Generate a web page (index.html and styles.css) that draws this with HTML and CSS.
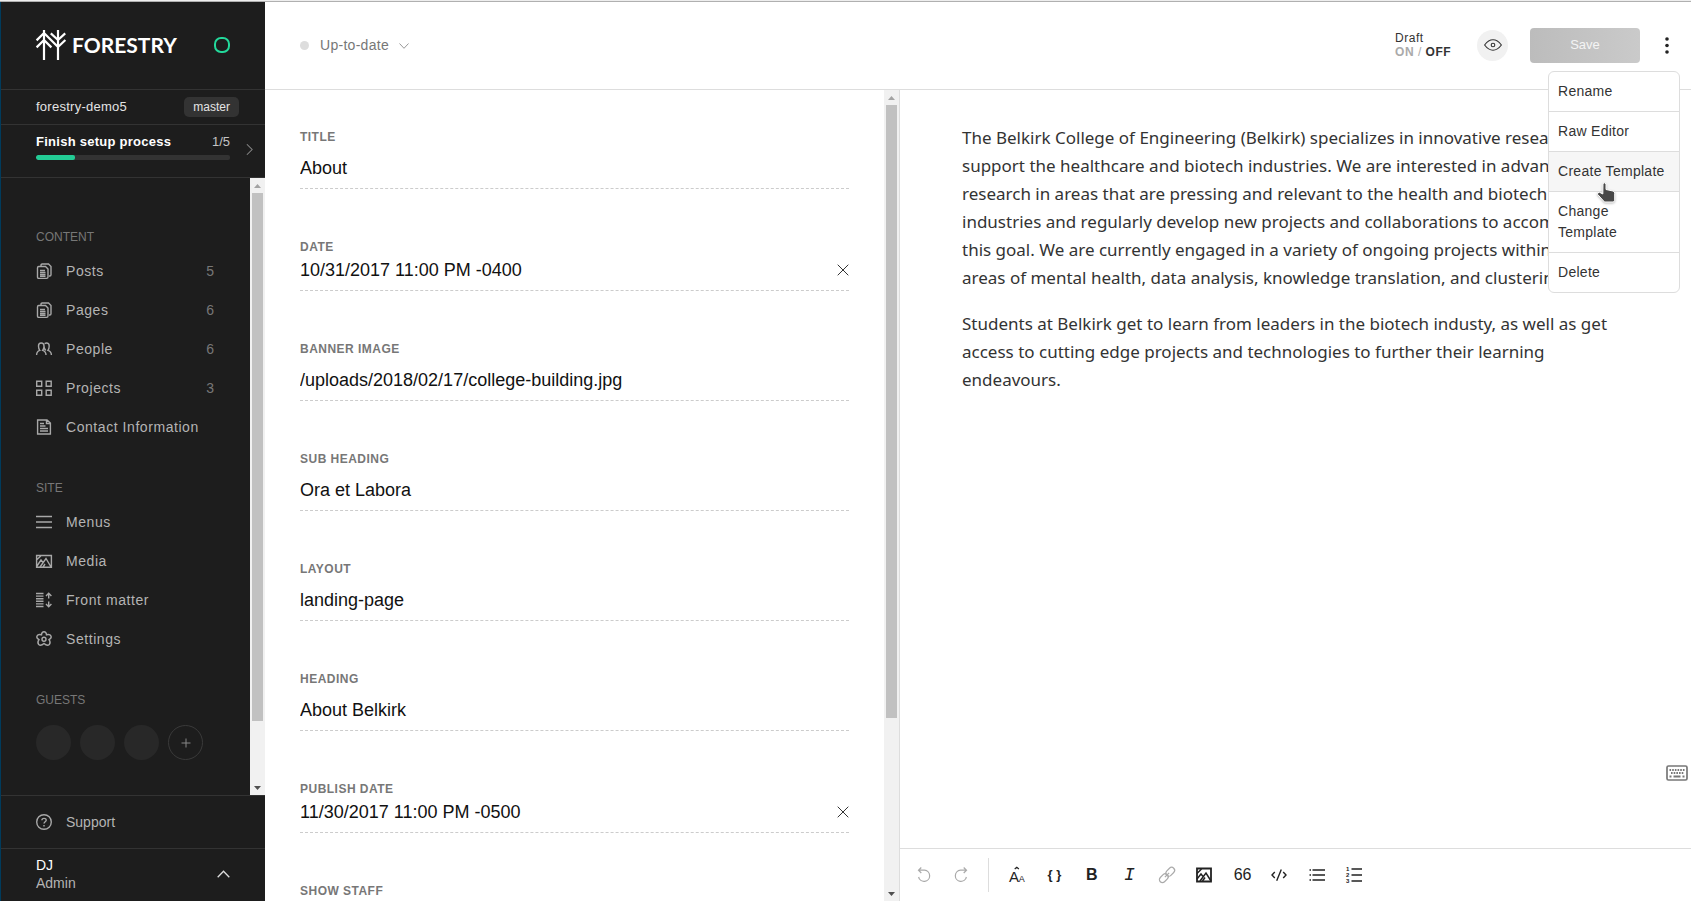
FILE: index.html
```html
<!DOCTYPE html>
<html lang="en">
<head>
<meta charset="utf-8">
<title>About – Forestry</title>
<link rel="stylesheet" href="styles.css">
</head>
<body>
<div class="app">
  <aside class="sidebar">
    <div class="brand">
      <a class="logo" href="#">
        <svg class="logo-mark" viewBox="0 0 30 30" fill="none" stroke="currentColor" stroke-width="2.200"><path d="M8 0v30M22 0v30M8 3L.6 10.4M8 10L.6 17.4M8 3l14 14M8 10l7.4 7.4M22 10l-7.2-6.6M22 10l7.2-6.6M22 17l7.4-7"/></svg>
        <span>FORESTRY</span>
      </a>
      <span class="status-ring"></span>
    </div>
    <div class="site-row">
      <span>forestry-demo5</span>
      <span class="branch">master</span>
    </div>
    <a class="setup" href="#">
      <span class="setup-main">
        <span class="setup-text"><b>Finish setup process</b><span class="setup-count">1/5</span></span>
        <span class="bar"><span class="bar-fill" style="width:20%"></span></span>
      </span>
      <svg class="setup-arrow" viewBox="0 0 8 14" fill="none" stroke="currentColor" stroke-width="1.2"><path d="M1 1l6 6-6 6"/></svg>
    </a>
    <div class="scroller">
      <nav class="nav">
        <h2>CONTENT</h2>
        <ul>
          <li><a href="#"><svg viewBox="0 0 16 16"><path d="M5 3V2.2Q5 1 6.200 1H12.500L15 3.500V11.800Q15 13 13.800 13H13M2.700 3.500H9.500L12 6V14Q12 15.400 10.600 15.400H2.700Q1.500 15.400 1.500 14V4.900Q1.500 3.500 2.700 3.500ZM4 7.500h5M4 9.500h5.500M4 11.500h5.500M4 13.300h5.500"/></svg>Posts<span class="count">5</span></a></li>
          <li><a href="#"><svg viewBox="0 0 16 16"><path d="M5 3V2.200Q5 1 6.200 1H12.500L15 3.500V11.800Q15 13 13.800 13H13M2.700 3.500H9.500L12 6V14Q12 15.400 10.600 15.400H2.700Q1.500 15.400 1.500 14V4.900Q1.500 3.500 2.700 3.500ZM4 7.500h5M4 9.500h5.500M4 11.500h5.500M4 13.300h5.500"/></svg>Pages<span class="count">6</span></a></li>
          <li><a href="#"><svg viewBox="0 0 16 16"><path d="M.6 14c0-3 .8-3.800 3.200-4.600C2.600 8 2.500 6.500 2.500 5c0-2 1.200-3 2.700-3S8 3 8 5c0 1.500-.2 3-1.400 4.400C9 10.200 10 11 10 14M8.600 2.600C9.200 2.200 9.800 2 10.500 2c1.500 0 2.700 1 2.700 3 0 1.500-.1 3-1.300 4.400 2.400.8 3.500 1.600 3.500 4.600M8 5c0 1.500.5 3.400 1.800 4.400"/></svg>People<span class="count">6</span></a></li>
          <li><a href="#"><svg viewBox="0 0 16 16"><path d="M.7 1.200h5v5h-5zM10.200 1.200h5v5h-5zM.7 10.200h5v5h-5zM10.200 10.200h5v5h-5z"/></svg>Projects<span class="count">3</span></a></li>
          <li><a href="#"><svg viewBox="0 0 16 16"><path d="M1.600 1H11L14.400 4V15H1.600ZM4 4.500h4M4 7h5.500M4 9.500h8M4 12h8M10.500 1.500V4.500H14"/></svg>Contact Information</a></li>
        </ul>
        <h2>SITE</h2>
        <ul>
          <li><a href="#"><svg viewBox="0 0 16 16"><path d="M0 2.500h16M0 8h16M0 13.500h16"/></svg>Menus</a></li>
          <li><a href="#"><svg viewBox="0 0 16 16"><path d="M.6 2.500h14.800v11.800H.6zM1 13l4-6 2 2.500M4 14l6-8.500 5 8.500M1 6.500L4.800 3M7 14l2-3"/></svg>Media</a></li>
          <li><a href="#"><svg viewBox="0 0 16 16"><path d="M0 1.500h7.500M0 4.100h7.500M0 6.700h7.500M0 9.300h7.500M0 11.900h7.500M0 14.500h7.500M12.700 1.500v5M12.700 9.500v5M10 4l2.700-2.700L15.400 4M10 12l2.700 2.700 2.700-2.700"/></svg>Front matter</a></li>
          <li><a href="#"><svg viewBox="0 0 16 16"><circle cx="8" cy="8.200" r="2"/><path d="M8 .8c1.600 0 2.300 1 2.500 3 1.900-.5 3.700-.4 4.500 1.200.7 1.600-.2 2.600-2 3.700 1.200 1.700 1.500 3.500.3 4.800-1.500 1.200-3.200.8-5.300-1-2.100 1.800-3.800 2.200-5.300 1-1.200-1.300-.9-3.100.3-4.800C1.200 7.600.3 6.600 1 5c.8-1.600 2.600-1.700 4.500-1.200.2-2 .9-3 2.500-3z"/></svg>Settings</a></li>
        </ul>
        <h2>GUESTS</h2>
        <div class="guests">
          <span class="guest"></span><span class="guest"></span><span class="guest"></span>
          <button class="guest guest-add" type="button" aria-label="Add guest"><svg viewBox="0 0 10 10" stroke="currentColor"><path d="M5 .5v9M.5 5h9"/></svg></button>
        </div>
      </nav>
      <div class="scrollbar">
        <svg class="arrow arrow-off" viewBox="0 0 7 4"><path d="M3.500 0L7 4H0z"/></svg>
        <span class="track"><span class="thumb nav-thumb"></span></span>
        <svg class="arrow" viewBox="0 0 7 4"><path d="M0 0h7L3.500 4z"/></svg>
      </div>
    </div>
    <a class="support" href="#"><svg viewBox="0 0 16 16"><circle cx="8" cy="8" r="7.300"/><path d="M5.900 6.300C5.900 3.700 10.200 3.700 10.200 6.200 10.200 7.800 8 7.800 8 9.600M8 11v1.400"/></svg>Support</a>
    <button class="user" type="button">
      <span class="user-name"><span class="user-id">DJ</span><span>Admin</span></span>
      <svg class="user-arrow" viewBox="0 0 13 8" fill="none" stroke="currentColor" stroke-width="1.300"><path d="M.7 7.200l5.800-6 5.800 6"/></svg>
    </button>
  </aside>

  <main class="main">
    <header class="topbar">
      <button class="sync" type="button"><span class="dot"></span>Up-to-date<svg viewBox="0 0 10 6" fill="none" stroke="currentColor"><path d="M.5.5L5 5.300 9.500.5"/></svg></button>
      <div class="actions">
        <div class="draft"><span>Draft</span><span><b class="off">ON</b> <span class="off">/</span> <b>OFF</b></span></div>
        <button class="preview" type="button" aria-label="Preview"><svg viewBox="0 0 18 12" fill="none" stroke="currentColor" stroke-width="1.100"><path d="M.6 6Q4.500.8 9 .8T17.400 6Q13.500 11.200 9 11.200T.6 6z"/><circle cx="9" cy="6" r="1.800"/></svg></button>
        <button class="save" type="button">Save</button>
        <div class="more">
          <button class="more-button" type="button" aria-label="More"><svg viewBox="0 0 4 17" fill="currentColor"><circle cx="2" cy="2" r="1.800"/><circle cx="2" cy="8.500" r="1.800"/><circle cx="2" cy="15" r="1.800"/></svg></button>
          <div class="menu">
            <button type="button">Rename</button>
            <button type="button">Raw Editor</button>
            <button class="hovered" type="button">Create Template</button>
            <button type="button">Change<br>Template</button>
            <button type="button">Delete</button>
            <svg class="pointer" viewBox="0 0 20 21"><path d="M7 1.500Q8.800 0 10 1.800V7.500L17 9Q18.800 9.500 18.700 11.300V18.300L17.500 20H8.500L1.500 12.300Q1.300 10 3.600 10.300L6.800 12z" fill="#484848" stroke="#fff"/></svg>
          </div>
        </div>
      </div>
    </header>
    <div class="panes">
      <section class="form-pane">
        <form class="form">
          <div class="field"><label for="f1">TITLE</label><input id="f1" value="About"></div>
          <div class="field date"><label for="f2">DATE</label><span class="date-row"><input id="f2" value="10/31/2017 11:00 PM -0400"><button type="button" aria-label="Clear"><svg viewBox="0 0 12 12" stroke="currentColor"><path d="M.7.7l10.600 10.600M11.300.7L.7 11.300"/></svg></button></span></div>
          <div class="field"><label for="f3">BANNER IMAGE</label><input id="f3" value="/uploads/2018/02/17/college-building.jpg"></div>
          <div class="field"><label for="f4">SUB HEADING</label><input id="f4" value="Ora et Labora"></div>
          <div class="field"><label for="f5">LAYOUT</label><input id="f5" value="landing-page"></div>
          <div class="field"><label for="f6">HEADING</label><input id="f6" value="About Belkirk"></div>
          <div class="field date"><label for="f7">PUBLISH DATE</label><span class="date-row"><input id="f7" value="11/30/2017 11:00 PM -0500"><button type="button" aria-label="Clear"><svg viewBox="0 0 12 12" stroke="currentColor"><path d="M.7.7l10.600 10.600M11.300.7L.7 11.300"/></svg></button></span></div>
          <div class="field"><span class="field-label">SHOW STAFF</span></div>
        </form>
        <div class="scrollbar">
          <svg class="arrow arrow-off" viewBox="0 0 7 4"><path d="M3.500 0L7 4H0z"/></svg>
          <span class="track"><span class="thumb form-thumb"></span></span>
          <svg class="arrow" viewBox="0 0 7 4"><path d="M0 0h7L3.500 4z"/></svg>
        </div>
      </section>
      <section class="editor">
        <article class="document">
          <p>The Belkirk College of Engineering (Belkirk) specializes in innovative research to<br>support the healthcare and biotech industries. We are interested in advancing<br>research in areas that are pressing and relevant to the health and biotech<br>industries and regularly develop new projects and collaborations to accomplish<br>this goal. We are currently engaged in a variety of ongoing projects within the<br>areas of mental health, data analysis, knowledge translation, and clustering.</p>
          <p>Students at Belkirk get to learn from leaders in the biotech industy, as well as get<br>access to cutting edge projects and technologies to further their learning<br>endeavours.</p>
        </article>
        <button class="keyboard" type="button" aria-label="Keyboard shortcuts"><svg viewBox="0 0 22 16" fill="none" stroke="currentColor"><rect x="1" y="1" width="20" height="14" rx="1.500" stroke-width="1.700"/><path d="M3.500 5h15" stroke-width="2" stroke-dasharray="1.600 1.080"/><path d="M5 8h12.500" stroke-width="2" stroke-dasharray="1.600 1.080"/><path d="M3.500 11.500h2M7.500 11.500h7M16.500 11.500h2" stroke-width="2"/></svg></button>
        <div class="toolbar">
          <button class="faded" type="button" aria-label="Undo"><svg viewBox="0 0 16 16"><path d="M3 3.200H8.500A5.600 5.600 0 1 1 2.600 10M5.300.5L2.500 3.200 5.300 6"/></svg></button>
          <button class="faded redo" type="button" aria-label="Redo"><svg viewBox="0 0 16 16"><path d="M13 3.200H7.500A5.600 5.600 0 1 0 13.400 10M10.700.5l2.800 2.700L10.700 6"/></svg></button>
          <div class="tools">
            <button type="button" aria-label="Heading"><svg viewBox="0 0 16 16"><path d="M5.700 2L7.800.3 9.900 2"/><g class="letters"><text x="0" y="14.500" font-size="15">A</text><text x="9.700" y="14.500" font-size="9">A</text></g></svg></button>
            <button class="glyph braces" type="button" aria-label="Snippet"><b>{ }</b></button>
            <button class="glyph" type="button"><b>B</b></button>
            <button class="glyph italic" type="button"><i>I</i></button>
            <button class="faded" type="button" aria-label="Link"><svg viewBox="0 0 16 16"><g transform="rotate(-45 8 8)"><rect x="-1.500" y="5" width="10" height="6" rx="3"/><rect x="7.500" y="5" width="10" height="6" rx="3"/><path d="M5 8h6"/></g></svg></button>
            <button type="button" aria-label="Image"><svg viewBox="0 0 16 16"><path stroke-width="1.800" d="M1 1.500h14v13H1z"/><path stroke-width="1.500" d="M1 12l4-5 2 2.500M4 14l6-8 5 8M1 6.500L5.500 2M6.500 14L9 10.500"/></svg></button>
            <button class="glyph" type="button" aria-label="Quote">66</button>
            <button type="button" aria-label="Code"><svg viewBox="0 0 16 16"><path stroke-width="1.400" d="M3.800 5L1 8l2.800 3M12.200 5L15 8l-2.800 3M10.300 2.500l-4.600 11.300"/></svg></button>
            <button type="button" aria-label="Bulleted list"><svg viewBox="0 0 16 16"><path stroke-width="1.500" d="M3.500 3H16M3.500 8H16M3.500 13H16M.5 3h1.500M.5 8h1.500M.5 13h1.500"/></svg></button>
            <button type="button" aria-label="Numbered list"><svg viewBox="0 0 16 16"><path stroke-width="1.500" d="M5.500 2H16M5.500 8H16M5.500 14H16"/><g class="digits"><text x="0" y="4">1</text><text x="0" y="10">2</text><text x="0" y="16">3</text></g></svg></button>
          </div>
        </div>
      </section>
    </div>
  </main>
</div>
</body>
</html>
```
FILE: styles.css
```css
* { box-sizing: border-box; }
body { margin: 0; border-top: 1px solid #eee; font: 14px/18px "Liberation Sans", Arial, sans-serif; color: #333; background: #fff; }
button, input { font: inherit; color: inherit; border: 0; padding: 0; margin: 0; background: none; outline: 0; }
button { cursor: pointer; }
a { color: inherit; text-decoration: none; }
svg { display: block; flex: none; overflow: visible; }
ul, h2, p { margin: 0; padding: 0; list-style: none; }

.app { display: grid; grid-template-columns: 265px minmax(0, 1fr); height: calc(100vh - 1px); border-top: 1px solid #b0b0b0; overflow: hidden; }

.sidebar { display: flex; flex-direction: column; min-height: 0; background: #1d1d1d; color: #b4b4b4; border-left: 1px solid #003b5c; }
.brand { display: flex; justify-content: space-between; align-items: center; height: 88px; padding: 0 35px 1px; border-bottom: 1px solid #333; }
.logo { display: flex; align-items: center; gap: 6px; color: #fff; font: 700 21px/30px Lato, sans-serif; }
.logo-mark { width: 30px; height: 30px; }
.status-ring { width: 16px; height: 16px; border: 2px solid #23d99b; border-radius: 7px; }
.site-row { display: flex; justify-content: space-between; align-items: center; height: 35px; padding: 0 26px 0 35px; border-bottom: 1px solid #333; font-size: 13px; letter-spacing: .02em; color: #e4e4e4; }
.branch { padding: 1px 9px; border-radius: 5px; background: #333; font-size: 12px; letter-spacing: 0; }
.setup { display: flex; justify-content: space-between; height: 53px; padding: 8px 12px 0 35px; border-bottom: 1px solid #333; font-size: 13px; }
.setup-main { display: flex; flex-direction: column; gap: 4px; width: 194px; }
.setup-text { display: flex; justify-content: space-between; letter-spacing: .02em; color: #fff; }
.setup-count { color: #c4c4c4; letter-spacing: 0; }
.bar { height: 5px; border-radius: 2px; background: #333; overflow: hidden; }
.bar-fill { display: block; height: 5px; border-radius: 2px; background: #23cc95; }
.setup-arrow { width: 7px; height: 13px; margin-top: 10px; color: #888; }

.scroller { display: flex; flex: 1; min-height: 0; }
.nav { flex: 1; padding: 17px 36px 0 35px; overflow: hidden; }
.nav h2 { margin-top: 34px; font-size: 12px; font-weight: 400; line-height: 16px; color: #777; }
.nav ul { margin-top: 6px; }
.nav a { display: flex; align-items: center; gap: 14px; height: 39px; letter-spacing: .04em; }
.nav a svg, .support svg { width: 16px; height: 16px; fill: none; stroke: #a8a8a8; stroke-width: 1.400; }
.count { margin-left: auto; letter-spacing: 0; color: #777; }
.guests { display: flex; gap: 9px; margin-top: 17px; }
.guest { width: 35px; height: 35px; border-radius: 50%; background: #282828; }
.guest-add { display: grid; place-items: center; border: 1px solid #3a3a3a; background: none; color: #888; }
.guest-add svg { width: 10px; height: 10px; }

.scrollbar { display: flex; flex-direction: column; flex: none; align-items: center; justify-content: space-between; width: 15px; padding: 6px 0 5px; background: #f1f1f1; }
.arrow { width: 7px; height: 4px; fill: #505050; }
.arrow-off { fill: #a3a3a3; }
.track { flex: 1; width: 11px; margin: 5px 0 6px; }
.thumb { display: block; background: #c1c1c1; }
.nav-thumb { height: 90%; }
.form-thumb { height: 78.5%; }

.support { display: flex; align-items: center; gap: 14px; height: 53px; padding: 0 35px; border-top: 1px solid #333; }
.user { display: flex; justify-content: space-between; align-items: center; height: 53px; padding: 0 35px 2px; border-top: 1px solid #333; text-align: left; }
.user-name { display: flex; flex-direction: column; }
.user-id { color: #fff; }
.user-arrow { width: 13px; height: 8px; color: #ddd; }

.main { display: flex; flex-direction: column; min-width: 0; min-height: 0; }
.topbar { display: flex; justify-content: space-between; align-items: center; height: 88px; padding: 0 12px 1px 35px; border-bottom: 1px solid #ddd; }
.sync { display: flex; align-items: center; color: #777; letter-spacing: .02em; }
.dot { width: 9px; height: 9px; margin-right: 11px; border-radius: 50%; background: #ddd; }
.sync svg { width: 10px; height: 6px; margin: 2px 0 0 10px; color: #999; }
.actions { display: flex; align-items: center; }
.draft { display: flex; flex-direction: column; font-size: 12px; line-height: 14px; letter-spacing: .04em; }
.draft .off { color: #aaa; }
.preview { display: grid; place-items: center; width: 31px; height: 31px; margin: 0 22px 0 26px; border-radius: 50%; background: #f1f1f1; }
.preview svg { width: 18px; height: 12px; }
.save { width: 110px; height: 35px; border-radius: 4px; background: linear-gradient(90deg, #bcbcbc, #cacaca); color: #f4f4f4; font-size: 13px; }
.more { position: relative; margin-left: 15px; }
.more-button { display: grid; place-items: center; width: 24px; height: 30px; color: #222; }
.more-button svg { width: 4px; height: 17px; }
.menu { position: absolute; z-index: 2; top: 41px; right: -1px; width: 132px; border: 1px solid #ddd; border-radius: 6px; background: #fff; overflow: hidden; }
.menu button { display: block; width: 100%; padding: 9px; border-bottom: 1px solid #ddd; line-height: 21px; letter-spacing: .02em; text-align: left; }
.menu button:nth-of-type(5) { border-bottom: 0; }
.menu .hovered { background: #f6f6f6; padding-right: 0; }
.pointer { position: absolute; top: 110px; left: 47px; width: 20px; height: 21px; filter: drop-shadow(0 1px 1px #bbb); }

.panes { display: grid; grid-template-columns: minmax(0, 635fr) minmax(0, 791fr); flex: 1; min-height: 0; }
.form-pane { display: flex; min-height: 0; border-right: 1px solid #ddd; }
.form { flex: 1; min-width: 0; padding: 40px 35px 0; overflow: hidden; }
.field { display: flex; flex-direction: column; gap: 4px; margin-bottom: 51px; }
.field label, .field-label { font-size: 12px; font-weight: 700; line-height: 14px; letter-spacing: .04em; color: #777; }
.field input { width: 100%; height: 41px; font-size: 18px; color: #111; border-bottom: 1px dashed #ccc; }
.field.date { gap: 0; }
.date-row { display: flex; align-items: center; height: 37px; padding-bottom: 4px; border-bottom: 1px dashed #ccc; }
.date-row input { flex: 1; height: 32px; border: 0; }
.date-row svg { width: 12px; height: 12px; }

.editor { display: flex; flex-direction: column; min-width: 0; min-height: 0; background: #fff; }
.document { flex: 1; min-height: 0; padding: 34px 0 0 62px; overflow: hidden; white-space: nowrap; font: 17px/28px "Noto Sans", "Open Sans", sans-serif; }
.document p { margin-bottom: 18px; }
.keyboard { align-self: flex-end; margin: 0 3px 67px 0; color: #777; }
.keyboard svg { width: 22px; height: 16px; }
.toolbar { display: flex; align-items: center; height: 53px; padding-left: 16px; border-top: 1px solid #ddd; color: #222; }
.toolbar button { display: grid; place-items: center; width: 16px; height: 34px; }
.toolbar svg { width: 16px; height: 16px; fill: none; stroke: currentColor; stroke-width: 1.200; }
.toolbar .faded { color: #aaa; }
.toolbar .redo { margin: 0 19px 0 21px; }
.tools { display: flex; justify-content: space-between; width: 374px; padding-left: 20px; border-left: 1px solid #ddd; }
.toolbar .glyph { font-size: 16px; }
.toolbar .braces { font-size: 13px; white-space: nowrap; }
.toolbar .italic { font-family: "Liberation Mono", monospace; font-size: 18px; }
.toolbar .letters, .toolbar .digits { fill: currentColor; stroke: none; }
.toolbar .digits { font-size: 6px; font-weight: 700; }
```
